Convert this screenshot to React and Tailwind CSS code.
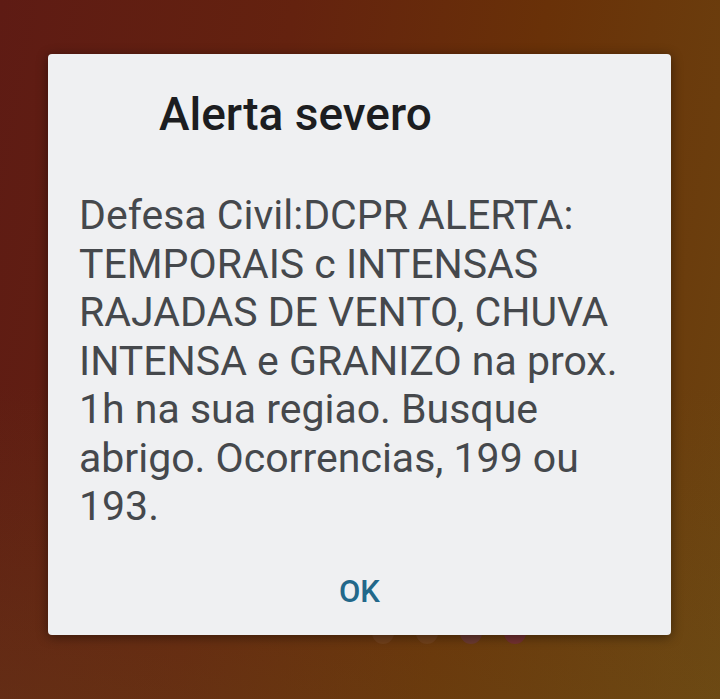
const message =
  "Defesa Civil:DCPR ALERTA: TEMPORAIS c INTENSAS RAJADAS DE VENTO, CHUVA INTENSA e GRANIZO na prox. 1h na sua regiao. Busque abrigo. Ocorrencias, 199 ou 193.";

export default function App() {
  return (
    <div className="relative h-[699px] w-full overflow-hidden bg-[linear-gradient(100deg,#5e1b14_0%,#64220f_35%,#693108_65%,#6c4410_100%)] font-['Roboto',sans-serif]">
      <div className="absolute inset-0 bg-[linear-gradient(180deg,transparent_55%,rgba(110,90,30,0.25)_100%)]" />
      {/* dots peeking out under the dialog */}
      <div className="absolute left-[372px] top-[622px] flex gap-[22px]">
        <span className="h-[22px] w-[22px] rounded-full bg-[#7a4a2a]/50" />
        <span className="h-[22px] w-[22px] rounded-full bg-[#7a4a2a]/50" />
        <span className="h-[22px] w-[22px] rounded-full bg-[#6c3a4a]/60" />
        <span className="h-[22px] w-[22px] rounded-full bg-[#7a2a4a]/60" />
      </div>
      <div className="relative pl-[48px] pt-[54px]">
        <div className="flex h-[581px] w-[623px] flex-col rounded-[4px] bg-[#eff0f2] shadow-[0_2px_12px_rgba(0,0,0,0.45)]">
          <h1 className="pl-[111px] pt-[33px] text-[46px] font-medium leading-[54px] text-[#1c1d20]">
            Alerta severo
          </h1>
          <p className="mt-[50px] pl-[31px] pr-[20px] text-[41px] leading-[48.5px] text-[#45484c]">
            {message}
          </p>
          <div className="mt-auto flex justify-center pb-[25px]">
            <button className="text-[31px] font-medium leading-[36px] text-[#22688a]">OK</button>
          </div>
        </div>
      </div>
    </div>
  );
}
